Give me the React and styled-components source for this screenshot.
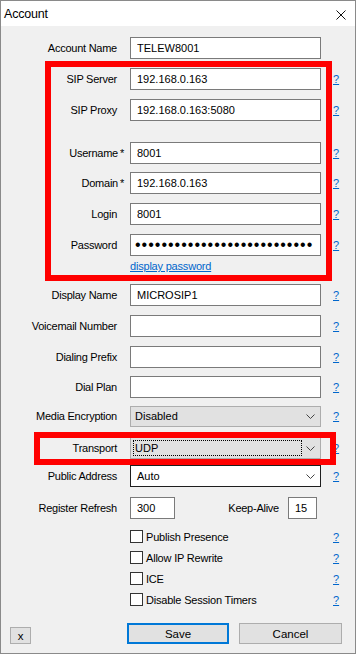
import React from 'react';
import styled, { createGlobalStyle } from 'styled-components';

const GlobalStyle = createGlobalStyle`
  html, body {
    margin: 0;
    padding: 0;
    background: #ffffff;
  }
  body {
    font-family: "Liberation Sans", Arial, sans-serif;
    font-size: 11px;
    color: #000;
  }
`;

const Window = styled.div`
  position: relative;
  box-sizing: border-box;
  width: 356px;
  height: 654px;
  border: 1px solid #8a8a8a;
  background: #f0f0f0;
  display: flex;
  flex-direction: column;
  overflow: hidden;
`;

const TitleBar = styled.div`
  height: 25px;
  background: #ffffff;
  display: flex;
  align-items: center;
  justify-content: space-between;
  padding: 0 9px 0 3px;
  font-size: 12.5px;
  letter-spacing: -0.2px;
`;

const CloseIcon = styled.svg`
  width: 10px;
  height: 10px;
  display: block;
  margin-top: 2px;
`;

const Body = styled.div`
  display: flex;
  flex-direction: column;
`;

const Row = styled.div`
  display: grid;
  grid-template-columns: 116px 191px 1fr;
  column-gap: 13px;
  align-items: center;
  height: ${p => p.$h || 22}px;
  margin-top: ${p => p.$mt}px;
`;

const Label = styled.div`
  text-align: right;
  letter-spacing: -0.25px;
  white-space: nowrap;
`;

const Req = styled.span`
  margin-left: 2px;
  margin-right: -7px;
`;

const Input = styled.input`
  box-sizing: border-box;
  width: ${p => p.$w ? p.$w + 'px' : '100%'};
  height: 22px;
  margin: 0;
  padding: 0 0 1px 6px;
  border: 1px solid #7a7a7a;
  background: #ffffff;
  font-family: "Liberation Sans", Arial, sans-serif;
  font-size: 11px;
  color: #000;
  outline: none;
`;

const PasswordInput = styled(Input)`
  font-size: 16px;
  letter-spacing: 1px;
  padding-left: 4px;
`;

const Help = styled.a`
  justify-self: start;
  margin-left: -1px;
  color: #0066cc;
  text-decoration: underline;
  font-size: 11px;
`;

const LinkText = styled.a`
  color: #0066cc;
  text-decoration: underline;
  letter-spacing: -0.2px;
`;

const Combo = styled.div`
  box-sizing: border-box;
  height: ${p => p.$h || 22}px;
  display: flex;
  align-items: center;
  padding: 0 5px 0 ${p => p.$plain ? 5 : 2}px;
  border: 1px solid ${p => p.$plain ? '#1e1e1e' : '#adadad'};
  background: ${p => p.$plain ? '#ffffff' : '#e1e1e1'};
`;

const ComboText = styled.div`
  flex: 1;
  align-self: stretch;
  display: flex;
  align-items: center;
  margin: 2px 4px 2px 0;
  padding-left: ${p => p.$plain ? 0 : 1}px;
  border: 1px dotted ${p => p.$focus ? '#000' : 'transparent'};
`;

const Chevron = () => (
  <svg width="9" height="5" viewBox="0 0 9 5" style={{ display: 'block' }}>
    <polyline points="0.5,0.5 4.5,4.5 8.5,0.5" fill="none" stroke="#444" strokeWidth="1" />
  </svg>
);

const Pair = styled.div`
  display: flex;
  align-items: center;
`;

const SubLabel = styled.div`
  margin-left: auto;
  margin-right: 9px;
  letter-spacing: -0.25px;
`;

const CheckRow = styled.label`
  display: flex;
  align-items: center;
  gap: 3px;
  letter-spacing: -0.2px;
`;

const Box = styled.span`
  box-sizing: border-box;
  width: 13px;
  height: 13px;
  border: 1px solid #333;
  background: #fff;
`;

const Footer = styled.div`
  display: flex;
  align-items: flex-end;
  margin-top: 13px;
  padding-left: 9px;
  height: 21px;
`;

const Button = styled.button`
  box-sizing: border-box;
  width: ${p => p.$w}px;
  height: ${p => p.$h || 21}px;
  margin: 0 0 0 ${p => p.$ml || 0}px;
  padding: 0;
  background: #e1e1e1;
  border: ${p => p.$primary ? '2px solid #0078d7' : '1px solid #adadad'};
  font-family: "Liberation Sans", Arial, sans-serif;
  font-size: 11.5px;
  color: #000;
`;

const Highlight = styled.div`
  position: absolute;
  box-sizing: border-box;
  left: ${p => p.$x}px;
  top: ${p => p.$y}px;
  width: ${p => p.$w}px;
  height: ${p => p.$h}px;
  border: 6px solid #ff0000;
  pointer-events: none;
`;

function Field({ label, req, value, mt }) {
  return (
    <Row $mt={mt}>
      <Label>{label}{req && <Req>*</Req>}</Label>
      <Input readOnly value={value} />
      <Help>?</Help>
    </Row>
  );
}

function Check({ label }) {
  return (
    <Row $h={21} $mt={0}>
      <span />
      <CheckRow><Box />{label}</CheckRow>
      <Help>?</Help>
    </Row>
  );
}

export default function App() {
  return (
    <>
      <GlobalStyle />
      <Window>
        <TitleBar>
          <span>Account</span>
          <CloseIcon viewBox="0 0 10 10">
            <path d="M0.5 0.5 L9.5 9.5 M9.5 0.5 L0.5 9.5" stroke="#111" strokeWidth="1" />
          </CloseIcon>
        </TitleBar>
        <Body>
          <Row $mt={11}>
            <Label>Account Name</Label>
            <Input readOnly value="TELEW8001" />
            <span />
          </Row>
          <Field label="SIP Server" value="192.168.0.163" mt={9} />
          <Field label="SIP Proxy" value="192.168.0.163:5080" mt={9} />
          <Field label="Username" req value="8001" mt={21} />
          <Field label="Domain" req value="192.168.0.163" mt={8} />
          <Field label="Login" value="8001" mt={9} />
          <Row $mt={9}>
            <Label>Password</Label>
            <PasswordInput readOnly type="password" value="passwordpasswordpassword123" />
            <Help>?</Help>
          </Row>
          <Row $h={14} $mt={3}>
            <span />
            <LinkText>display password</LinkText>
            <span />
          </Row>
          <Field label="Display Name" value="MICROSIP1" mt={11} />
          <Field label="Voicemail Number" value="" mt={9} />
          <Field label="Dialing Prefix" value="" mt={9} />
          <Field label="Dial Plan" value="" mt={8} />
          <Row $mt={7}>
            <Label>Media Encryption</Label>
            <Combo $h={21}>
              <ComboText>Disabled</ComboText>
              <Chevron />
            </Combo>
            <Help>?</Help>
          </Row>
          <Row $mt={10}>
            <Label>Transport</Label>
            <Combo $h={22}>
              <ComboText $focus>UDP</ComboText>
              <Chevron />
            </Combo>
            <Help>?</Help>
          </Row>
          <Row $mt={6}>
            <Label>Public Address</Label>
            <Combo $plain $h={22}>
              <ComboText $plain>Auto</ComboText>
              <Chevron />
            </Combo>
            <Help>?</Help>
          </Row>
          <Row $mt={10}>
            <Label>Register Refresh</Label>
            <Pair>
              <Input readOnly value="300" $w={45} />
              <SubLabel>Keep-Alive</SubLabel>
              <Input readOnly value="15" $w={29} style={{ marginRight: 4 }} />
            </Pair>
            <span />
          </Row>
          <div style={{ height: 7 }} />
          <Check label="Publish Presence" />
          <Check label="Allow IP Rewrite" />
          <Check label="ICE" />
          <Check label="Disable Session Timers" />
          <Footer>
            <Button $w={21} $h={17}>x</Button>
            <Button $w={102} $ml={96} $primary>Save</Button>
            <Button $w={103} $ml={10}>Cancel</Button>
          </Footer>
        </Body>
        <Highlight $x={44} $y={60} $w={287} $h={220} />
        <Highlight $x={33} $y={431} $w={302} $h={33} />
      </Window>
    </>
  );
}
